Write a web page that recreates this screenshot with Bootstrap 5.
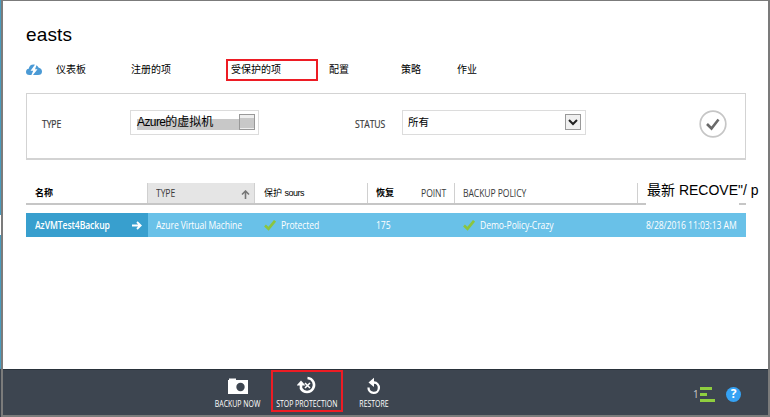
<!DOCTYPE html>
<html lang="zh-CN">
<head>
<meta charset="utf-8">
<meta name="viewport" content="width=device-width, initial-scale=1">
<title>easts</title>
<link href="https://cdn.jsdelivr.net/npm/bootstrap@5.3.0/dist/css/bootstrap.min.css" rel="stylesheet">
<style>
body{width:770px;height:417px;font:10px/16px "Open Sans","Noto Sans CJK SC",sans-serif;color:#3b3b3b;background:#fff}
.cjk{font-family:"Liberation Sans","Noto Sans CJK SC",sans-serif;color:#000}
.edge{width:1px;background:linear-gradient(#4a9bbd 0 215px,#fff 215px 235px,#4a9bbd 235px 369px,#3c434d 369px)}
.shell{border:solid #7b7b7b;border-width:1px 2px 2px}
.content{padding:22px 22px 0 23px;height:368px}
.title{font-size:19px;line-height:24px;letter-spacing:.15px}
.tabs{height:22px;margin-top:12px;font-size:10px}
.cloud{margin-right:14px}
.tab-a{width:75px}.tab-b{width:95px}
.tab-on{width:92px;height:22px;border:2px solid #ed1c24;padding-left:3px}
.tab-c{margin-left:11px;width:72px}.tab-d{width:56px}
.filters{margin-top:12px;height:67px;border:1px solid #d3d3d3;border-bottom-width:2px;padding:0 18px 4px 15px}
.fl{-webkit-text-stroke:.2px}
.narrow{display:inline-block;transform:scaleX(.86);transform-origin:0 50%;letter-spacing:-.1px;white-space:nowrap}
.picker{height:25px;border:1px solid #dcdcdc;font-size:10.5px;margin-bottom:4px}
.pick-type{width:129px;margin-left:68px;padding:0 3px 0 6px}
.pick-status{width:184px;margin-left:17px;padding:0 4px 0 5px}
.shade{position:absolute;left:6px;top:8px;width:115px;height:11px;background:#c8c8c8}
.shade-text{position:relative;font-size:12px}
.shade-text span{letter-spacing:-.6px}
.drop{width:16px;height:16px;border:1px solid #999;background:#f0f0f0}
.drop-shaded{background:linear-gradient(#eee 3px,#c8c8c8 3px 13px,#eee 13px)}
.grid-head{height:22px;margin-top:23px;background:linear-gradient(#c6c6c6,#c6c6c6) 0 20px/620px 2px no-repeat,linear-gradient(#c6c6c6,#c6c6c6) 713px 20px/7px 2px no-repeat}
.grid-head>div{height:20px;padding-top:2px;border-right:1px solid #d0d0d0;white-space:nowrap}
.grid-head .cjk{font-size:9px}
.grid-head>.g-date{border:0;font-size:14px;padding:0 0 0 9px;line-height:15px}
.grid-head .sours{letter-spacing:-.5px}
.g-name{width:122px;padding-left:9px}.g-type{width:107px;padding-left:8px}
.g-state{width:113px;padding-left:9px}.g-point{width:87px;padding-left:8px}
.g-policy{width:183px;padding-left:8px}.g-date{width:108px;padding-left:8px}
.sorted{background:#e5e5e5}
.at-right{transform-origin:100% 50%}
.grid-row{height:24px;margin-top:8px;background:#69c1e8;color:#fff;white-space:nowrap}
.grid-row .g-name{background:#389fce;font-weight:600}
.go-arrow{position:absolute;right:6px;top:8px}
.tick{margin-right:5px}
.commands{height:46px;background:#3d4550;border-top:1px solid #29323a;color:#fff;font-size:9px}
.cmd{height:42px;line-height:12px;white-space:nowrap}
.cmd svg{margin-top:5px;height:21px;flex:none}
.cmd span{transform:scaleX(.77);margin-top:2px}
.c1{width:60px;margin-left:205px}.c2{width:72px;border:2px solid #ed1c24;margin-left:3px}
.c2 svg{margin-top:3px}.c3{width:62px}
.status-icons{margin-left:288px;padding-top:3px}
.tally{width:7px;color:#ccc;font-size:10px}
.help{width:15px;height:15px;margin-left:11px;background:#35a2f4;font-size:12px}
</style>
<script src="https://cdn.jsdelivr.net/npm/bootstrap@5.3.0/dist/js/bootstrap.bundle.min.js"></script>
</head>
<body class="d-flex overflow-hidden">
<div class="edge flex-shrink-0"></div>
<div class="shell flex-grow-1">
  <main class="content">
    <h1 class="title cjk m-0 fw-normal">easts</h1>
    <nav class="tabs cjk d-flex align-items-center text-nowrap">
      <svg class="cloud" width="16" height="12" viewBox="0 0 16 12"><path d="M3.500 11Q0 11 0 8q0-2.800 2.700-3.200Q3.500.5 7.500.5 11 .5 12.500 3.500 16 4.500 16 7.500 16 11 12 11z" fill="#4b9ad5"/><path d="M9.500 0 4.500 6.800h2.700L5 12h1.200L11.500 5.200H9L11 0z" fill="#fff"/></svg>
      <div class="tab-a">仪表板</div><div class="tab-b">注册的项</div>
      <div class="tab-on d-flex align-items-center">受保护的项</div>
      <div class="tab-c">配置</div><div class="tab-d">策略</div><div>作业</div>
    </nav>
    <section class="filters d-flex align-items-center">
      <label class="fl" style="width:20px"><span class="narrow">TYPE</span></label>
      <div class="picker pick-type cjk position-relative d-flex align-items-center justify-content-between text-nowrap">
        <i class="shade"></i><span class="shade-text"><span>Azure</span>的虚拟机</span><i class="drop drop-shaded position-relative"></i>
      </div>
      <label class="fl" style="margin-left:96px;width:30px"><span class="narrow">STATUS</span></label>
      <div class="picker pick-status cjk d-flex align-items-center justify-content-between">
        <span>所有</span><span class="drop d-flex align-items-center justify-content-center"><svg width="10" height="7" viewBox="0 0 10 7"><path d="m1 1 4 4 4-4" fill="none" stroke="#222" stroke-width="2"/></svg></span>
      </div>
      <svg class="ms-auto" width="28" height="28" viewBox="0 0 28 28" fill="none"><circle cx="14" cy="14" r="12.8" stroke="#c6c6c6" stroke-width="1.7"/><path d="m8 14 4.500 4.500 7-9" stroke="#696969" stroke-width="2.600"/></svg>
    </section>
    <section>
      <div class="grid-head d-flex">
        <div class="g-name cjk fw-bold">名称</div>
        <div class="g-type sorted d-flex justify-content-between"><span class="narrow">TYPE</span><svg class="me-1" style="margin-top:5px" width="9" height="9" viewBox="0 0 9 9"><path d="M4.500 9V1M1 4.500 4.500 1 8 4.500" fill="none" stroke="#777" stroke-width="1.600"/></svg></div>
        <div class="g-state cjk">保护 <span class="sours">sours</span></div>
        <div class="g-point d-flex justify-content-between pe-2"><span class="cjk fw-bold">恢复</span><span class="narrow at-right">POINT</span></div>
        <div class="g-policy"><span class="narrow">BACKUP POLICY</span></div>
        <div class="g-date cjk">最新 RECOVE"/ p</div>
      </div>
      <div class="grid-row d-flex align-items-stretch">
        <div class="g-name position-relative d-flex align-items-center"><span class="narrow">AzVMTest4Backup</span><svg class="go-arrow" width="10" height="9" viewBox="0 0 10 9"><path d="M0 4.500h9M5 1l3.700 3.500L5 8" fill="none" stroke="#fff" stroke-width="1.800"/></svg></div>
        <div class="g-type d-flex align-items-center"><span class="narrow">Azure Virtual Machine</span></div>
        <div class="g-state d-flex align-items-center"><svg class="tick" width="12" height="11" viewBox="0 0 12 11"><path d="m1 5.500 3.500 3.300L11 .8" fill="none" stroke="#8bc53f" stroke-width="2.700"/></svg><span class="narrow">Protected</span></div>
        <div class="g-point d-flex align-items-center"><span class="narrow">175</span></div>
        <div class="g-policy d-flex align-items-center"><svg class="tick" width="12" height="11" viewBox="0 0 12 11"><path d="m1 5.500 3.500 3.300L11 .8" fill="none" stroke="#8bc53f" stroke-width="2.700"/></svg><span class="narrow">Demo-Policy-Crazy</span></div>
        <div class="g-date d-flex align-items-center"><span class="narrow">8/28/2016 11:03:13 AM</span></div>
      </div>
    </section>
  </main>
  <footer class="commands d-flex">
    <div class="cmd c1 d-flex flex-column align-items-center"><svg width="20" viewBox="0 0 20 21"><path d="M0 19V5h1V3.500h7V5h12v14z" fill="#fff"/><circle cx="12.500" cy="12" r="4.200" fill="#3d4550"/></svg><span>BACKUP NOW</span></div>
    <div class="cmd c2 d-flex flex-column align-items-center"><svg width="20" viewBox="0 0 20 21" fill="none" stroke="#fff"><path d="M10.500 3A7 7 0 1 1 4 13.500V9" stroke-width="2.600"/><path d="m-.5 10.500 4.500-5L8.500 10.500z" fill="#fff" stroke="none"/><path d="m8 8 5 5m0-5-5 5" stroke-width="1.600"/></svg><span>STOP PROTECTION</span></div>
    <div class="cmd c3 d-flex flex-column align-items-center"><svg width="14" viewBox="0 0 14 21" fill="none" stroke="#fff"><path d="M5.500 7.500H7a5.200 5.200 0 1 1-5.500 5" stroke-width="2.300"/><path d="m1.500 7.500 5.500-4.800v9.300z" fill="#fff" stroke="none"/></svg><span>RESTORE</span></div>
    <div class="status-icons d-flex align-items-center"><span class="tally">1</span><svg width="15" height="15" viewBox="0 0 15 15" fill="#8fce3f"><path d="M0 0h12v3H0zM0 6h7v3H0zM0 12h15v3H0z"/></svg><span class="help d-flex align-items-center justify-content-center rounded-circle fw-bold">?</span></div>
  </footer>
</div>
</body>
</html>
